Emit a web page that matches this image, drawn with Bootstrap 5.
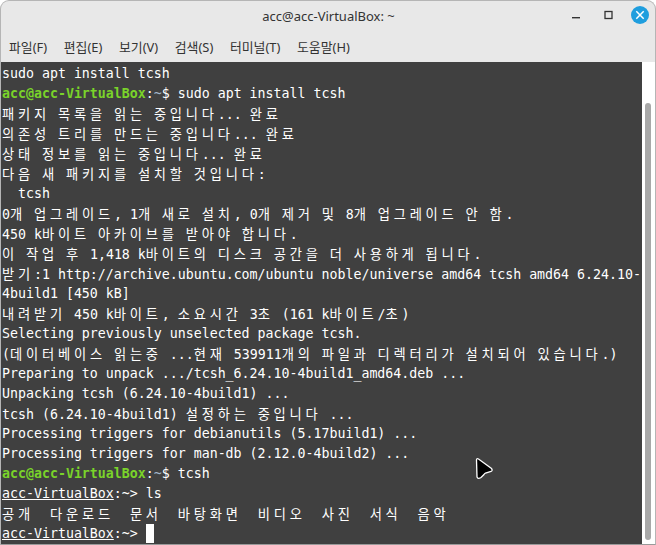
<!doctype html>
<html lang="ko"><head><meta charset="utf-8">
<link rel="stylesheet" href="https://cdn.jsdelivr.net/npm/bootstrap@5.3.0/dist/css/bootstrap.min.css">
<style>
html,body{margin:0;height:545px;overflow:hidden;background:#fff}
.win{width:656px;height:545px;border:1px solid #b5b5b5;border-bottom-color:#9a9a9a;border-radius:9px 9px 0 0;overflow:hidden;background:#e8e8e8;position:relative}
.titlebar{height:33px;font:13px "Noto Sans","Noto Sans CJK KR",sans-serif;color:#333;position:relative}
.wtitle{width:100%;text-align:center;padding-bottom:4px;padding-left:1px}
.winbtns{position:absolute;right:0;top:0;height:33px}
.menubar{height:28px;font:12.9px "Noto Sans","Noto Sans CJK KR",sans-serif;color:#333;padding-left:8px;padding-bottom:4px;gap:16.6px}
.termrow{height:482px;background:#fff}
.term{width:642px;height:482px;background:#404040;color:#fff;font:13.28px/20px "DejaVu Sans Mono","Noto Sans CJK KR",monospace;padding:2px 0 0 1px;overflow:hidden}
.tline{height:20px;white-space:pre}
.ko{font-family:"Noto Sans CJK KR","DejaVu Sans Mono",sans-serif;letter-spacing:3.78px}
.gr{color:#7ad32a;font-weight:700}
.bl{color:#9fb4c8}
.un{text-decoration:underline}
.cursor{display:inline-block;width:8px;height:19px;background:#fff;vertical-align:top}
.sbar{width:13px;position:relative}
.thumb{position:absolute;left:3px;width:6px;top:41px;bottom:4px;background:#a8a8a8;border-radius:3px}
.ptr{position:absolute;left:474px;top:456px}
</style></head><body>
<div class="win">
 <div class="titlebar d-flex align-items-center">
  <div class="wtitle">acc@acc-VirtualBox: ~</div>
  <div class="winbtns d-flex align-items-center">
   <svg width="154" height="33" viewBox="0 0 154 33">
    <rect x="71" y="16" width="8" height="1.4" fill="#333"/>
    <rect x="104" y="10.5" width="7" height="7" fill="none" stroke="#333" stroke-width="1.3"/>
    <circle cx="139" cy="14" r="9" fill="#1f9ede"/>
    <path d="M135.3 10.3 L142.7 17.7 M142.7 10.3 L135.3 17.7" stroke="#fff" stroke-width="1.5"/>
   </svg>
  </div>
 </div>
 <div class="menubar d-flex align-items-center">
  <span>파일(F)</span><span>편집(E)</span><span>보기(V)</span><span>검색(S)</span><span>터미널(T)</span><span>도움말(H)</span>
 </div>
 <div class="termrow d-flex">
  <div class="term">
<div class="tline">sudo apt install tcsh</div>
<div class="tline"><span class="gr">acc@acc-VirtualBox</span>:<span class="bl">~</span>$ sudo apt install tcsh</div>
<div class="tline"><span class="ko">패키지</span> <span class="ko">목록을</span> <span class="ko">읽는</span> <span class="ko">중입니다</span>... <span class="ko">완료</span></div>
<div class="tline"><span class="ko">의존성</span> <span class="ko">트리를</span> <span class="ko">만드는</span> <span class="ko">중입니다</span>... <span class="ko">완료</span></div>
<div class="tline"><span class="ko">상태</span> <span class="ko">정보를</span> <span class="ko">읽는</span> <span class="ko">중입니다</span>... <span class="ko">완료</span></div>
<div class="tline"><span class="ko">다음</span> <span class="ko">새</span> <span class="ko">패키지를</span> <span class="ko">설치할</span> <span class="ko">것입니다</span>:</div>
<div class="tline">  tcsh</div>
<div class="tline">0<span class="ko">개</span> <span class="ko">업그레이드</span>, 1<span class="ko">개</span> <span class="ko">새로</span> <span class="ko">설치</span>, 0<span class="ko">개</span> <span class="ko">제거</span> <span class="ko">및</span> 8<span class="ko">개</span> <span class="ko">업그레이드</span> <span class="ko">안</span> <span class="ko">함</span>.</div>
<div class="tline">450 k<span class="ko">바이트</span> <span class="ko">아카이브를</span> <span class="ko">받아야</span> <span class="ko">합니다</span>.</div>
<div class="tline"><span class="ko">이</span> <span class="ko">작업</span> <span class="ko">후</span> 1,418 k<span class="ko">바이트의</span> <span class="ko">디스크</span> <span class="ko">공간을</span> <span class="ko">더</span> <span class="ko">사용하게</span> <span class="ko">됩니다</span>.</div>
<div class="tline"><span class="ko">받기</span>:1 http://archive.ubuntu.com/ubuntu noble/universe amd64 tcsh amd64 6.24.10-</div>
<div class="tline">4build1 [450 kB]</div>
<div class="tline"><span class="ko">내려받기</span> 450 k<span class="ko">바이트</span>, <span class="ko">소요시간</span> 3<span class="ko">초</span> (161 k<span class="ko">바이트</span>/<span class="ko">초</span>)</div>
<div class="tline">Selecting previously unselected package tcsh.</div>
<div class="tline">(<span class="ko">데이터베이스</span> <span class="ko">읽는중</span> ...<span class="ko">현재</span> 539911<span class="ko">개의</span> <span class="ko">파일과</span> <span class="ko">디렉터리가</span> <span class="ko">설치되어</span> <span class="ko">있습니다</span>.)</div>
<div class="tline">Preparing to unpack .../tcsh_6.24.10-4build1_amd64.deb ...</div>
<div class="tline">Unpacking tcsh (6.24.10-4build1) ...</div>
<div class="tline">tcsh (6.24.10-4build1) <span class="ko">설정하는</span> <span class="ko">중입니다</span> ...</div>
<div class="tline">Processing triggers for debianutils (5.17build1) ...</div>
<div class="tline">Processing triggers for man-db (2.12.0-4build2) ...</div>
<div class="tline"><span class="gr">acc@acc-VirtualBox</span>:<span class="bl">~</span>$ tcsh</div>
<div class="tline"><span class="un">acc-VirtualBox</span>:~&gt; ls</div>
<div class="tline"><span class="ko">공개</span>  <span class="ko">다운로드</span>  <span class="ko">문서</span>  <span class="ko">바탕화면</span>  <span class="ko">비디오</span>  <span class="ko">사진</span>  <span class="ko">서식</span>  <span class="ko">음악</span></div>
<div class="tline"><span class="un">acc-VirtualBox</span>:~&gt; <span class="cursor"></span></div>
  </div>
  <div class="sbar"><div class="thumb"></div></div>
 </div>
 <svg class="ptr" width="20" height="24" viewBox="0 0 20 24"><path d="M1.5 3 Q1.5 1 3.5 2 L16.5 11.5 Q18 13.5 16 14.5 L10.5 16 Q9.5 16.5 9 17.5 L6 20.5 Q3 22.5 2 20 Z" fill="#000" stroke="#fff" stroke-width="1.3"/></svg>
</div>
</body></html>
